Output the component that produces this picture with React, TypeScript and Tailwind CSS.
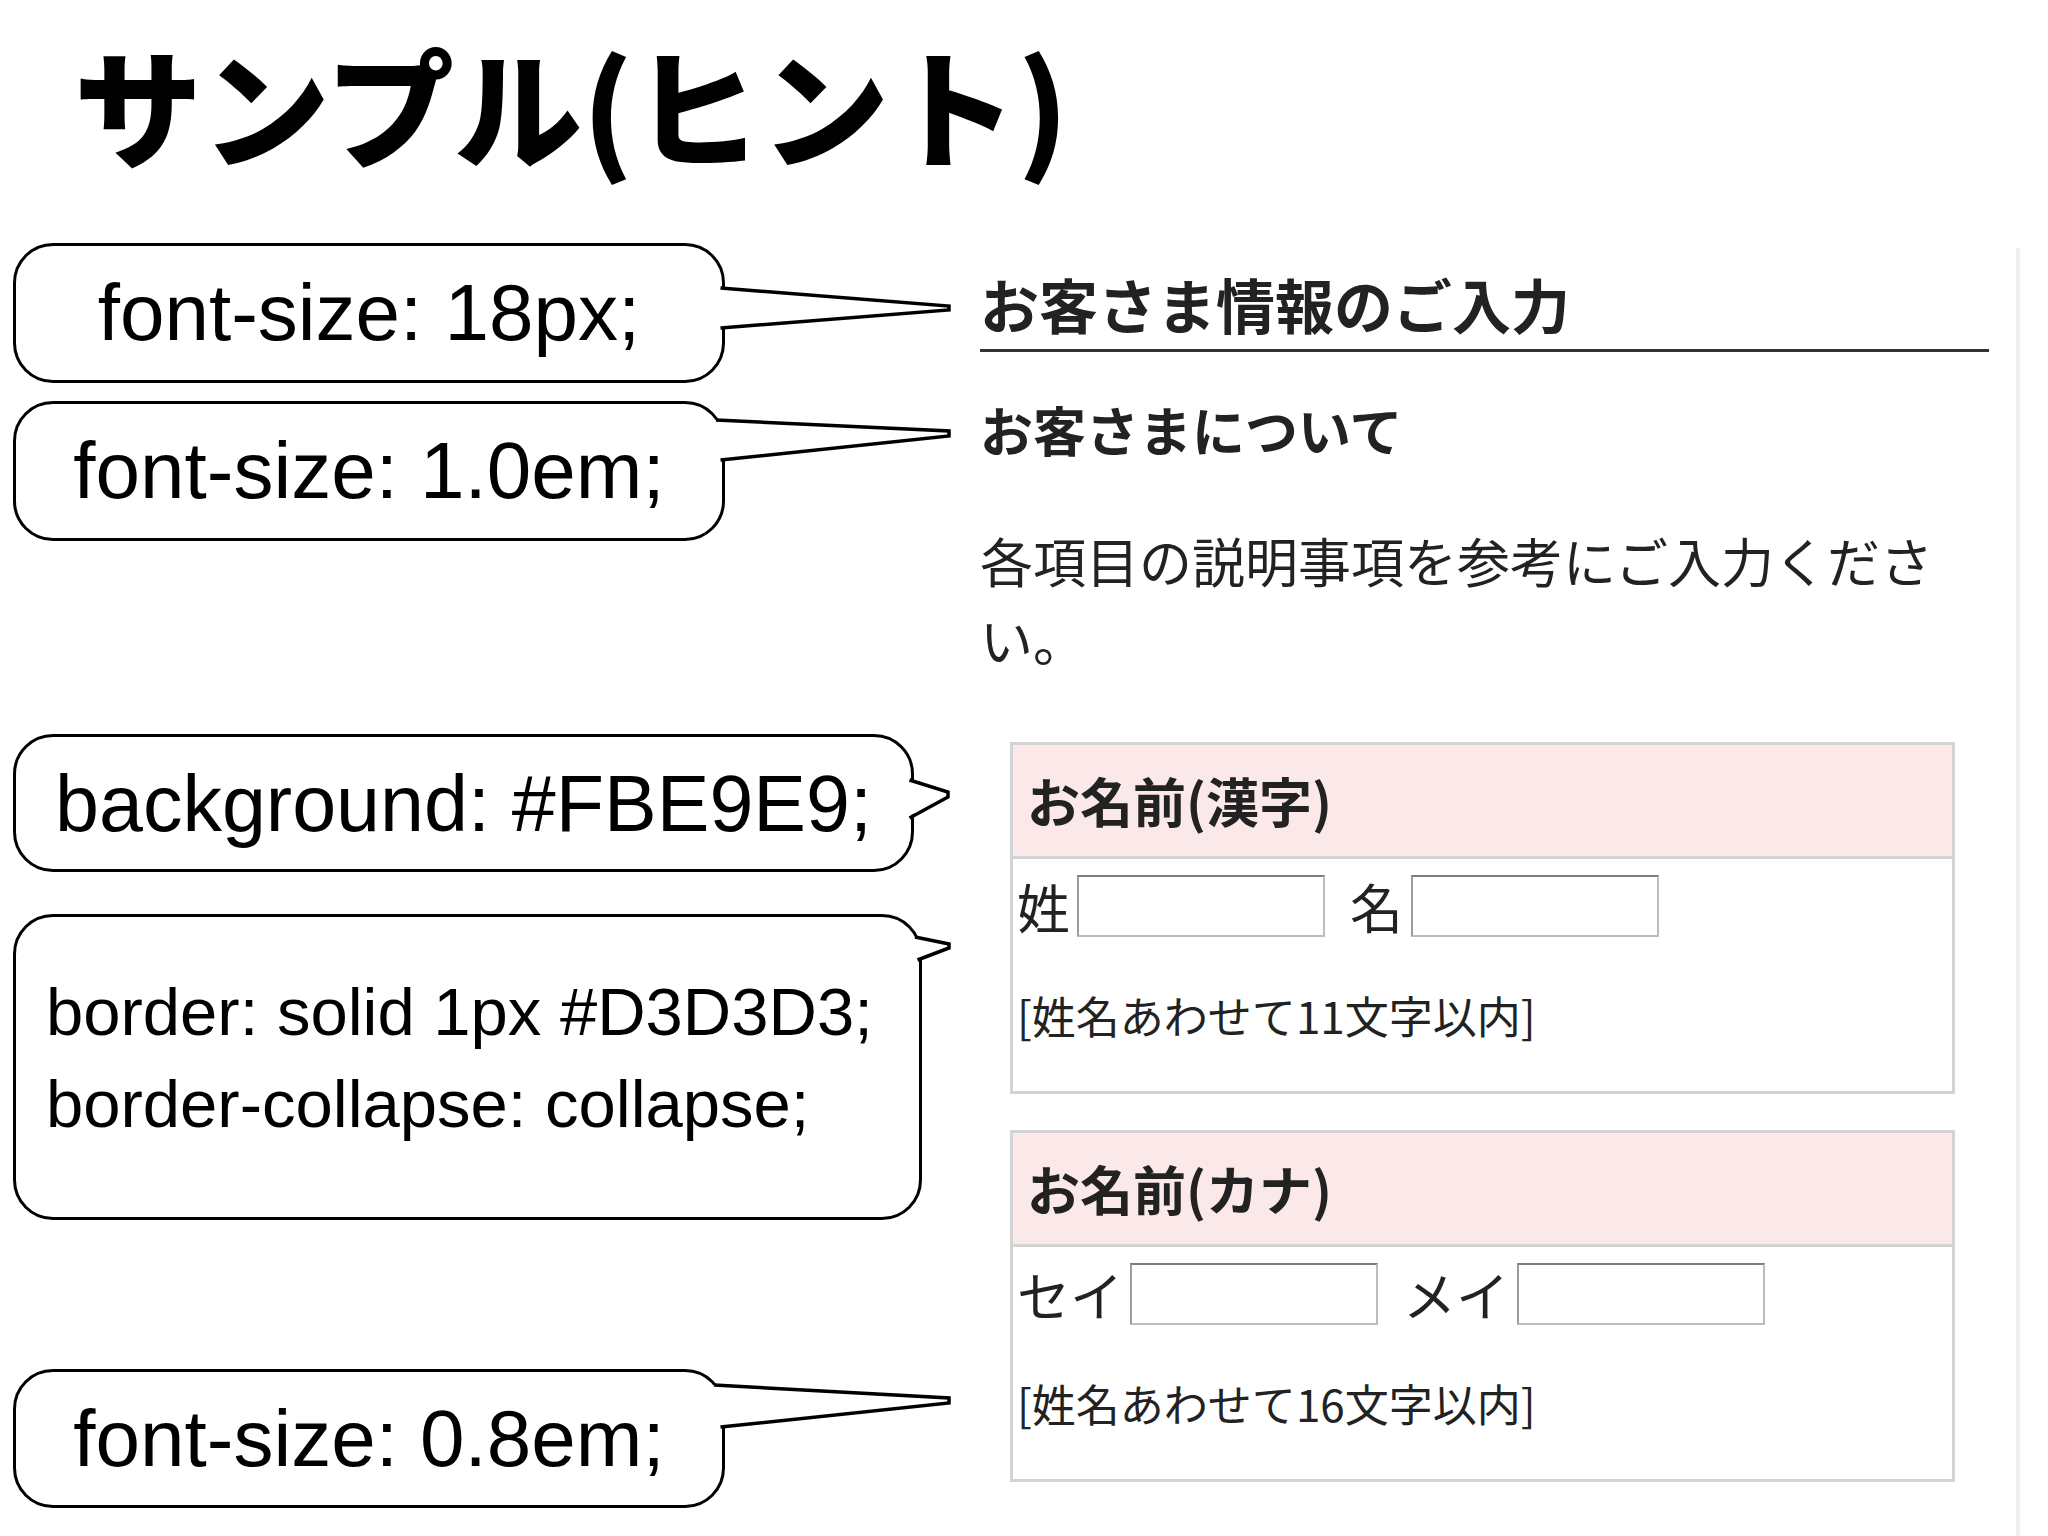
import React from 'react';

const sans = "font-['Liberation_Sans',Arial,sans-serif]";
const jp = "font-['Noto_Sans_CJK_JP',sans-serif]";

type TailProps = { fill: string; line: string; w: number; h: number };

// speech-bubble tail, drawn over the right edge of its box
const Tail: React.FC<TailProps> = ({ fill, line, w, h }) => (
  <svg
    className="absolute top-[-3px] left-[calc(100%-16px)]"
    width={w}
    height={h}
    viewBox={`0 0 ${w} ${h}`}
  >
    <polygon points={fill} fill="#fff" />
    <polyline points={line} fill="none" stroke="#000" strokeWidth={3.5} strokeLinejoin="miter" />
  </svg>
);

type CalloutProps = { className: string; children: React.ReactNode; tail: React.ReactNode };

const Callout: React.FC<CalloutProps> = ({ className, children, tail }) => (
  <div className={`relative rounded-[40px] border-[3px] border-black bg-white ${className}`}>
    {children}
    {tail}
  </div>
);

type NameTableProps = { title: string; first: string; last: string; limit: string; className?: string };

const NameTable: React.FC<NameTableProps> = ({ title, first, last, limit, className = '' }) => (
  <div className={`ml-[30px] w-[945px] border-[3px] border-[#d3d3d3] ${className}`}>
    <div className="flex h-[111px] items-center bg-[#fbe9e9] pl-[14px] text-[53px] font-bold">
      {title}
    </div>
    <div className="border-t-[3px] border-[#d3d3d3] px-[4px] pt-[16px] pb-[48px]">
      <div className="flex h-[62px] items-center text-[53px] leading-none">
        <span>{first}</span>
        <input
          type="text"
          className="ml-[7px] h-[62px] w-[248px] border-2 border-[#bcbcbc] border-t-[#7c7c7c] border-l-[#9c9c9c] bg-white outline-none"
        />
        <span className="ml-[25px]">{last}</span>
        <input
          type="text"
          className="ml-[8px] h-[62px] w-[248px] border-2 border-[#bcbcbc] border-t-[#7c7c7c] border-l-[#9c9c9c] bg-white outline-none"
        />
      </div>
      <p className="mt-[50px] text-[44px] leading-[56px]">[姓名あわせて{limit}文字以内]</p>
    </div>
  </div>
);

const App: React.FC = () => {
  return (
    <div className="h-[1536px] w-[2048px] overflow-hidden bg-white text-black">
      <h1 className={`${jp} h-[243px] pl-[74px] pt-[40px] text-[128px] font-black leading-none`}>
        サンプル(ヒント)
      </h1>

      <div className="flex h-[1293px]">
        {/* annotations */}
        <div className={`${sans} w-[951px] shrink-0 pl-[13px]`}>
          <Callout
            className="flex h-[140px] w-[712px] items-center justify-center"
            tail={
              <Tail
                w={250}
                h={140}
                fill="10,45 243,63 243,67 10,85"
                line="14.5,45 243,63 243,67 14.5,85"
              />
            }
          >
            <span className="text-[80px] leading-none">font-size: 18px;</span>
          </Callout>

          <Callout
            className="mt-[18px] flex h-[140px] w-[712px] items-center justify-center"
            tail={
              <Tail
                w={250}
                h={140}
                fill="6,19 243,30 243,35 10,59"
                line="10,19 243,30 243,35 14.5,59"
              />
            }
          >
            <span className="text-[80px] leading-none">font-size: 1.0em;</span>
          </Callout>

          <Callout
            className="mt-[193px] flex h-[138px] w-[901px] items-center justify-center"
            tail={
              <Tail
                w={60}
                h={138}
                fill="10,46 53,58 53,63 10,84"
                line="14.5,46 53,58 53,63 14.5,84"
              />
            }
          >
            <span className="text-[79px] leading-none">background: #FBE9E9;</span>
          </Callout>

          <Callout
            className="mt-[42px] flex h-[306px] w-[909px] flex-col justify-center pb-[18px] pl-[30px]"
            tail={
              <Tail
                w={56}
                h={80}
                fill="8,23 46,30 46,34 10,46"
                line="12,23 46,30 46,34 14.5,46"
              />
            }
          >
            <span className="text-[67px] leading-[92px]">border: solid 1px #D3D3D3;</span>
            <span className="text-[67px] leading-[92px]">border-collapse: collapse;</span>
          </Callout>

          <Callout
            className="mt-[149px] flex h-[139px] w-[712px] items-center justify-center"
            tail={
              <Tail
                w={250}
                h={139}
                fill="4,16 243,29 243,34 10,58"
                line="8,16 243,29 243,34 14.5,58"
              />
            }
          >
            <span className="text-[80px] leading-none">font-size: 0.8em;</span>
          </Callout>
        </div>

        {/* screenshot of the form */}
        <div className="flex-1 pt-[5px]">
          <div className={`${jp} h-full w-[1069px] border-r-4 border-[#efefef] pl-[29px] pt-[20px] text-[#222]`}>
            <h2 className="w-[1009px] border-b-[3px] border-[#333] pb-[9px] text-[59px] font-bold leading-[72px]">
              お客さま情報のご入力
            </h2>
            <h3 className="mt-[45px] text-[53px] font-bold leading-[64px]">お客さまについて</h3>
            <p className="mt-[60px] text-[53px] leading-[79px]">
              各項目の説明事項を参考にご入力くださ
              <br />
              い。
            </p>

            <NameTable className="mt-[63px]" title="お名前(漢字)" first="姓" last="名" limit="11" />
            <NameTable className="mt-[36px]" title="お名前(カナ)" first="セイ" last="メイ" limit="16" />
          </div>
        </div>
      </div>
    </div>
  );
};

export default App;
